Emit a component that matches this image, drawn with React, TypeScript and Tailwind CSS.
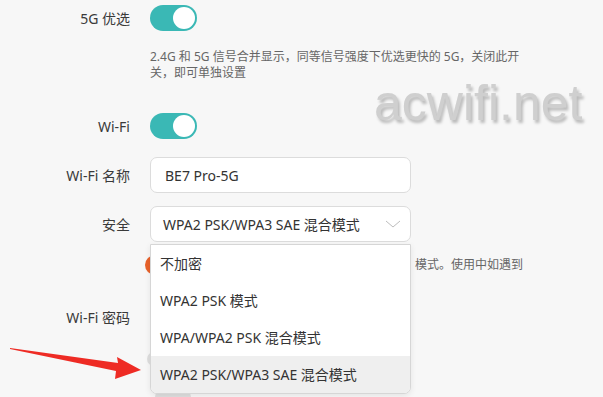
import React from "react";

const font = { fontFamily: '"Noto Sans", "Noto Sans CJK SC", sans-serif' };

function Toggle() {
  return (
    <div className="relative h-[26px] w-[47px] rounded-full bg-[#3ab8b5]">
      <div className="absolute right-[2px] top-[2px] h-[22px] w-[22px] rounded-full bg-white" />
    </div>
  );
}

function Row({ label, children, className = "" }: { label: string; children: React.ReactNode; className?: string }) {
  return (
    <div className={"flex items-center " + className}>
      <div className="w-[130px] shrink-0 text-right text-[14px] text-[#3a3a3a]">{label}</div>
      <div className="ml-[20px]">{children}</div>
    </div>
  );
}

export default function App() {
  const options = ["不加密", "WPA2 PSK 模式", "WPA/WPA2 PSK 混合模式", "WPA2 PSK/WPA3 SAE 混合模式"];
  return (
    <div className="relative h-[397px] w-[603px] overflow-hidden bg-[#f7f7f7]" style={font}>
      <div className="flex flex-col pt-[5px]">
        <Row label="5G 优选">
          <Toggle />
        </Row>
        <div className="ml-[150px] mt-[18px] w-[380px] text-[12px] leading-[16px] text-[#666]">
          2.4G 和 5G 信号合并显示，同等信号强度下优选更快的 5G，关闭此开关，即可单独设置
        </div>
        <Row label="Wi-Fi" className="mt-[32px]">
          <Toggle />
        </Row>
        <Row label="Wi-Fi 名称" className="mt-[18px]">
          <div className="flex h-[36px] w-[261px] items-center rounded-[7px] border border-[#dcdcdc] bg-white px-[14px] text-[14px] text-[#333]">
            BE7 Pro-5G
          </div>
        </Row>
        <Row label="安全" className="mt-[13px]">
          <div className="relative">
            <div className="flex h-[36px] w-[261px] items-center justify-between rounded-[7px] border border-[#dcdcdc] bg-white pl-[12px] pr-[6px] text-[14px] text-[#333]">
              <span>WPA2 PSK/WPA3 SAE 混合模式</span>
              <svg width="18" height="10" viewBox="0 0 18 10" className="mr-[2px]">
                <path d="M2 2 L9 8 L16 2" fill="none" stroke="#bdbdbd" strokeWidth="1" />
              </svg>
            </div>
            <div className="absolute left-0 top-[38px] z-10 w-[261px] overflow-hidden rounded-b-[7px] border border-[#d6d6d6] bg-white shadow-[0_2px_6px_rgba(0,0,0,0.08)]">
              {options.map((o, i) => (
                <div
                  key={o}
                  className={
                    "flex h-[37px] items-center px-[9px] text-[14px] text-[#333] " +
                    (i === 3 ? "bg-[#efefef]" : "")
                  }
                >
                  {o}
                </div>
              ))}
            </div>
          </div>
        </Row>
        <div className="ml-[145px] mt-[13px] flex items-center">
          <div className="h-[20px] w-[20px] rounded-full bg-[#e8622a]" />
          <div className="ml-[250px] text-[12px] text-[#666]">模式。使用中如遇到</div>
        </div>
        <Row label="Wi-Fi 密码" className="mt-[24px]">
          <div className="h-[36px] w-[261px] rounded-[7px] border border-[#dcdcdc] bg-white" />
        </Row>
        <div className="ml-[147px] mt-[17px] h-[14px] w-[40px] rounded-full bg-[#dedede]" />
        <div className="ml-[155px] mt-[24px] h-[14px] w-[36px] rounded-full bg-[#dedede]" />
      </div>

      <div
        className="absolute left-[374px] top-[66px] text-[50px] text-[#cfcfcf]"
        style={{ fontFamily: '"Liberation Sans", sans-serif', textShadow: "2px 3px 3px rgba(0,0,0,0.25)" }}
      >
        acwifi.net
      </div>

      <svg className="absolute left-0 top-[340px]" width="150" height="50" viewBox="0 0 150 50">
        <polygon points="10,8 118,23 117,17 141,30 115,39 116,31 10,9" fill="#ee2b24" />
      </svg>
    </div>
  );
}
